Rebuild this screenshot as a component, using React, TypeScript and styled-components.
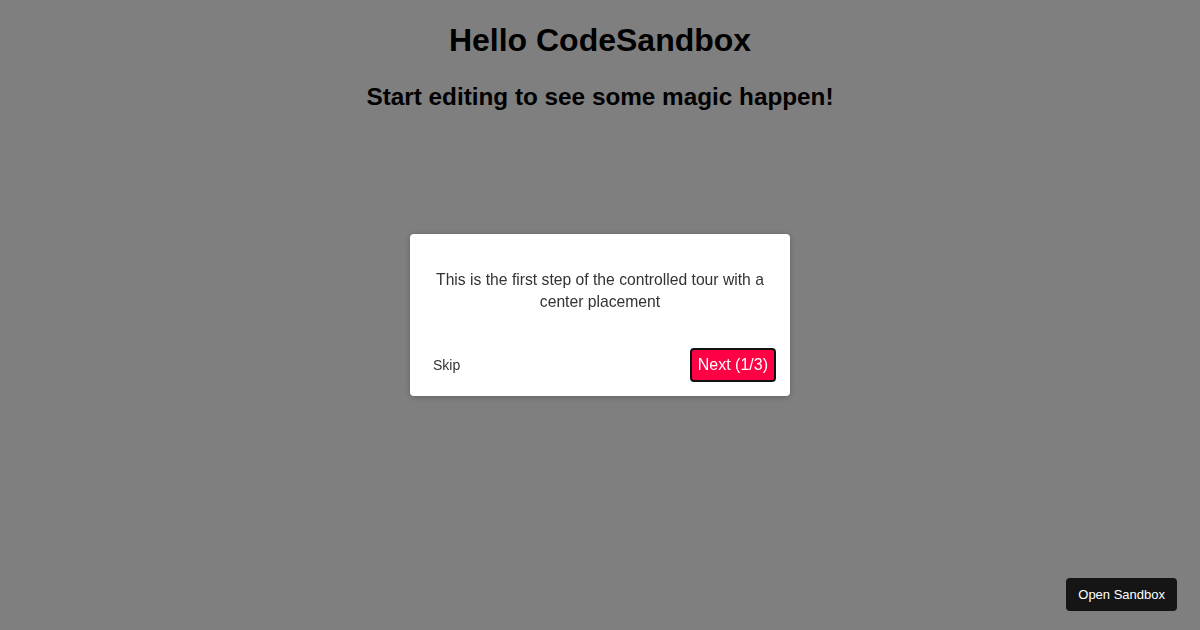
import styled, { createGlobalStyle } from "styled-components";

const GlobalStyle = createGlobalStyle`
  body {
    margin: 0;
    font-family: "Liberation Sans", Arial, sans-serif;
    background: #ffffff;
    color: #000000;
  }
`;

const Page = styled.div`
  text-align: center;
  padding-top: 1px;
`;

const Title = styled.h1`
  font-size: 32px;
  margin: 21px 0 24px;
`;

const Subtitle = styled.h2`
  font-size: 24.3px;
  margin: 0;
`;

const Overlay = styled.div`
  position: fixed;
  inset: 0;
  background: rgba(0, 0, 0, 0.5);
  display: flex;
  align-items: center;
  justify-content: center;
`;

const TourCard = styled.div`
  width: 380px;
  box-sizing: border-box;
  background: #ffffff;
  border-radius: 4px;
  box-shadow: 0 1px 6px rgba(0, 0, 0, 0.25);
  padding: 35px 14px 14px;
  color: #333333;
`;

const StepText = styled.p`
  margin: 0 9px 35px;
  font-size: 15.7px;
  line-height: 22px;
  text-align: center;
`;

const Controls = styled.div`
  display: flex;
  align-items: center;
  justify-content: space-between;
  padding-left: 9px;
`;

const SkipButton = styled.button`
  background: none;
  border: 0;
  padding: 0;
  font-family: inherit;
  font-size: 14px;
  color: #333333;
  cursor: pointer;
`;

const NextButton = styled.button`
  background: #ff0044;
  color: #ffffff;
  border: 2px solid #111111;
  border-radius: 4px;
  height: 34px;
  padding: 0 6px;
  font-family: inherit;
  font-size: 16px;
  cursor: pointer;
`;

const SandboxBadge = styled.a`
  position: fixed;
  right: 23px;
  bottom: 19px;
  background: #151515;
  color: #ffffff;
  border-radius: 4px;
  padding: 0 12px;
  height: 33px;
  display: flex;
  align-items: center;
  font-size: 13px;
  text-decoration: none;
`;

export default function App() {
  return (
    <>
      <GlobalStyle />
      <Page>
        <Title>Hello CodeSandbox</Title>
        <Subtitle>Start editing to see some magic happen!</Subtitle>
      </Page>
      <Overlay>
        <TourCard>
          <StepText>
            This is the first step of the controlled tour with a center
            placement
          </StepText>
          <Controls>
            <SkipButton>Skip</SkipButton>
            <NextButton>Next (1/3)</NextButton>
          </Controls>
        </TourCard>
      </Overlay>
      <SandboxBadge href="#">Open Sandbox</SandboxBadge>
    </>
  );
}
